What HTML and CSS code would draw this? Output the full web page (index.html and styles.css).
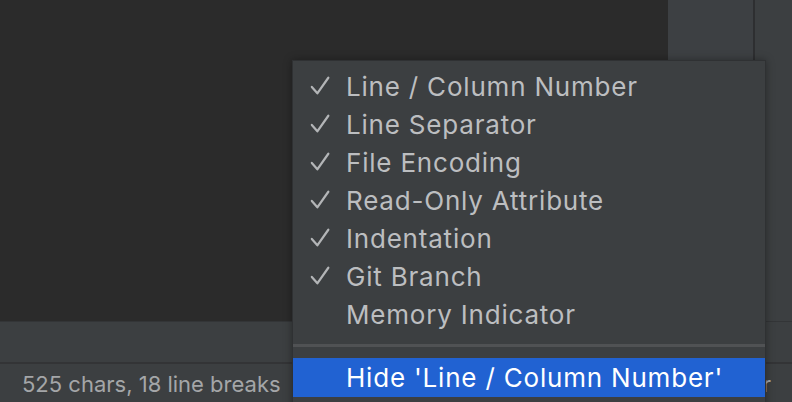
FILE: index.html
```html
<!DOCTYPE html>
<html>
<head>
<meta charset="utf-8">
<link rel="stylesheet" href="styles.css">
</head>
<body>
<div class="ide">
  <div class="top">
    <div class="editor"></div>
    <div class="side"></div>
    <div class="divider"></div>
    <div class="strip"></div>
  </div>
  <div class="toolband"></div>
  <div class="statusbar">
    <span class="status-text">525 chars, 18 line breaks</span>
    <span class="status-right">Git: master</span>
  </div>
  <div class="menu">
    <div class="item"><svg class="check" viewBox="0 0 24 24"><path d="M2 13 L8 20 L20 3"/></svg><span>Line / Column Number</span></div>
    <div class="item"><svg class="check" viewBox="0 0 24 24"><path d="M2 13 L8 20 L20 3"/></svg><span>Line Separator</span></div>
    <div class="item"><svg class="check" viewBox="0 0 24 24"><path d="M2 13 L8 20 L20 3"/></svg><span>File Encoding</span></div>
    <div class="item"><svg class="check" viewBox="0 0 24 24"><path d="M2 13 L8 20 L20 3"/></svg><span>Read-Only Attribute</span></div>
    <div class="item"><svg class="check" viewBox="0 0 24 24"><path d="M2 13 L8 20 L20 3"/></svg><span>Indentation</span></div>
    <div class="item"><svg class="check" viewBox="0 0 24 24"><path d="M2 13 L8 20 L20 3"/></svg><span>Git Branch</span></div>
    <div class="item"><span class="nocheck"></span><span>Memory Indicator</span></div>
    <div class="sep"></div>
    <div class="item selected"><span class="nocheck"></span><span>Hide 'Line / Column Number'</span></div>
  </div>
</div>
</body>
</html>
```
FILE: styles.css
```css
html, body {
  margin: 0;
  padding: 0;
  width: 792px;
  height: 402px;
  overflow: hidden;
  background: #3c3f41;
  font-family: Inter, "Noto Sans", "Liberation Sans", sans-serif;
}
.ide {
  position: relative;
  width: 792px;
  height: 402px;
  display: flex;
  flex-direction: column;
}
.top {
  display: flex;
  height: 321px;
  border-bottom: 1px solid #333537;
}
.editor {
  width: 668px;
  background: #2b2b2b;
}
.side {
  width: 85px;
  background: #3d4043;
}
.divider {
  width: 2px;
  background: #2e2f31;
}
.strip {
  flex: 1;
  background: #3c3f41;
}
.toolband {
  height: 40px;
  background: #3c3f41;
  border-bottom: 2px solid #333436;
}
.statusbar {
  flex: 1;
  display: flex;
  align-items: center;
  justify-content: space-between;
  padding: 0 21px 0 22px;
  background: #3c3f41;
  color: #a4a6a8;
  font-size: 22px;
}
.status-text {
  padding-top: 2px;
}
.status-right {
  padding-top: 2px;
}
.menu {
  position: absolute;
  left: 292px;
  top: 60px;
  width: 472px;
  height: 350px;
  padding-top: 6px;
  background: #3c3f41;
  border: 1px solid #2f3133;
  box-shadow: 0 0 8px rgba(0,0,0,0.35);
  color: #bcbec0;
  font-size: 26px;
  letter-spacing: 0.8px;
}
.item {
  display: flex;
  align-items: center;
  height: 38px;
  padding-left: 17px;
}
.check {
  width: 22px;
  height: 22px;
  margin-right: 14px;
  fill: none;
  stroke: #b3b5b7;
  stroke-width: 2.4;
  stroke-linecap: round;
  stroke-linejoin: round;
}
.nocheck {
  width: 22px;
  margin-right: 14px;
}
.sep {
  height: 3px;
  margin: 11px 0 11px;
  background: #505254;
}
.selected {
  height: 39px;
  background: #2162d2;
  color: #ffffff;
}
```
